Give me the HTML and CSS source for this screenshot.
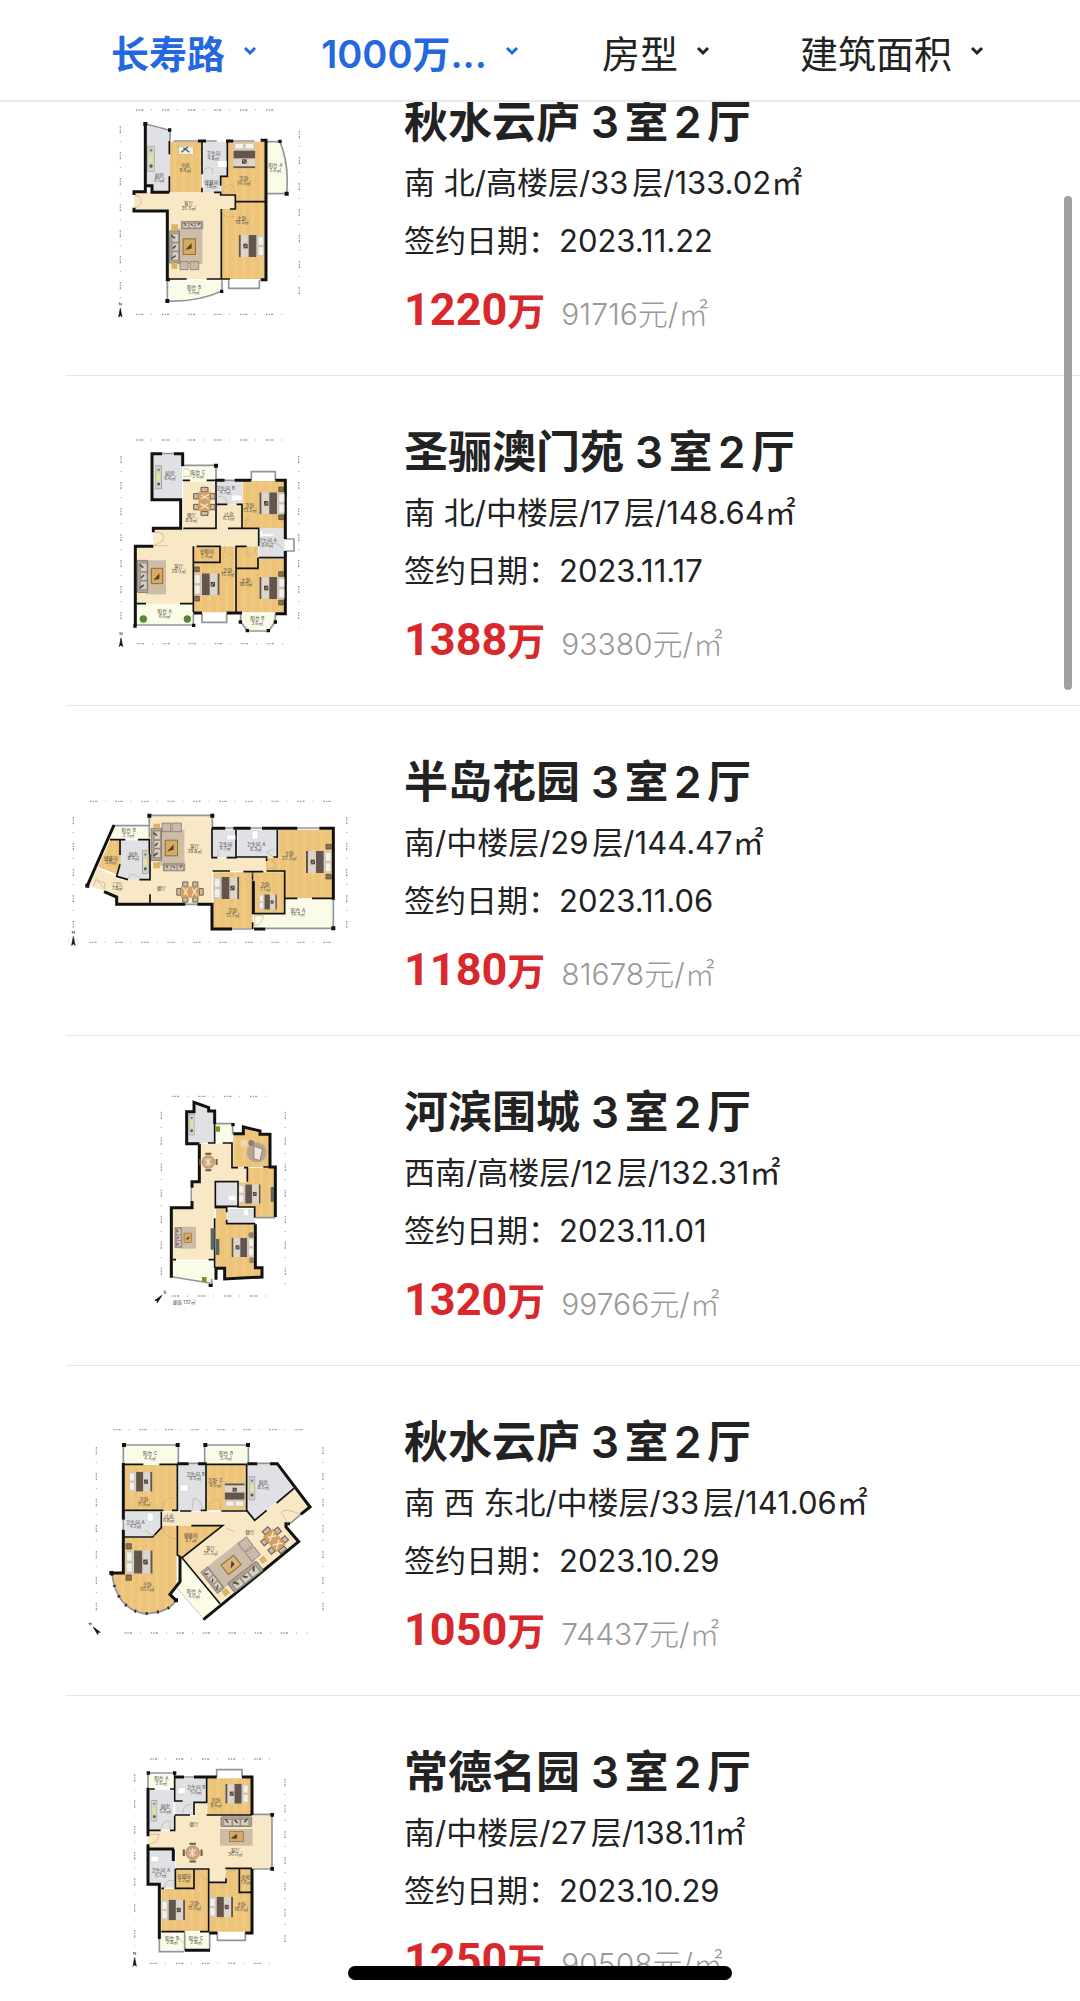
FILE: index.html
```html
<!DOCTYPE html>
<html lang="zh-CN">
<head>
    <meta charset="UTF-8">
    <meta name="viewport" content="width=device-width, initial-scale=1.0">
    <title>成交房源</title>
    <link rel="stylesheet" href="styles.css">
</head>
<body>
    <!-- Shared furniture and floor textures -->
    <svg class="defs" aria-hidden="true">
        <defs>
            <pattern id="wood" width="26" height="60" patternUnits="userSpaceOnUse">
                <rect width="26" height="60" fill="#efc980"/>
                <rect x="13" width="13" height="60" fill="#ecc378"/>
                <path d="M0 0V60M13 0V60" stroke="#e6ba6e" stroke-width="1"/>
            </pattern>
            <symbol id="bed" viewBox="0 0 76 66">
                <rect width="76" height="66" fill="#d9cfc3"/>
                <rect x="1" y="4" width="17" height="27" rx="4" fill="#f3efe9" stroke="#8f857b"/>
                <rect x="1" y="35" width="17" height="27" rx="4" fill="#f3efe9" stroke="#8f857b"/>
                <rect x="23" width="23" height="66" fill="#62554c"/>
                <rect x="50" width="18" height="66" fill="#ddd4ca"/>
                <rect x="70" width="6" height="66" fill="#62554c"/>
                <rect x="49" y="26" width="13" height="14" fill="#504640"/>
                <path d="M51 37l8-8" stroke="#eee" stroke-width="2"/>
            </symbol>
            <symbol id="sofa" viewBox="0 0 100 34">
                <rect x="1" y="1" width="98" height="32" rx="4" fill="#b0a294" stroke="#675d55" stroke-width="2"/>
                <path d="M10 10H36V30H10ZM38 10H62V30H38ZM64 10H90V30H64Z" fill="#d8cdc2" stroke="#83776c" stroke-width="2"/>
                <path d="M15 8l9 13M76 19l9-11M45 12l9 9" stroke="#584f49" stroke-width="5"/>
            </symbol>
            <symbol id="rug" viewBox="0 0 80 110">
                <rect width="80" height="110" fill="#cdbda7"/>
                <rect x="20" y="32" width="38" height="48" fill="#d6aa62" stroke="#906c35" stroke-width="3"/>
                <path d="M32 63l12-13v10z" fill="#54412c" stroke="#54412c" stroke-width="4"/>
            </symbol>
            <symbol id="dining" viewBox="0 0 90 70">
                <path d="M22 3H38V17H22ZM54 3H70V17H54ZM22 53H38V67H22ZM54 53H70V67H54ZM3 24H16V45H3ZM75 24H87V45H75Z" fill="#cdbba5" stroke="#655a50" stroke-width="3"/>
                <rect x="16" y="17" width="58" height="36" fill="#d4a064"/>
                <path d="M24 21l14 25M38 22l-12 22M52 24l16 22M66 22l-14 25" stroke="#f4e5cf" stroke-width="4"/>
            </symbol>
            <symbol id="round" viewBox="0 0 70 70">
                <path d="M24 5H46M24 65H46M5 24V46M65 24V46" stroke="#655a50" stroke-width="7"/>
                <circle cx="35" cy="35" r="23" fill="#d1a779" stroke="#8a6b4c" stroke-width="2"/>
                <path d="M24 25l20 20M44 24l-19 22M34 20v30" stroke="#eee0cc" stroke-width="4"/>
            </symbol>
            <symbol id="stove" viewBox="0 0 22 78">
                <rect x="1" y="1" width="20" height="76" fill="#d3d2c9" stroke="#8a8a84" stroke-width="2"/>
                <rect x="5" y="28" width="11" height="22" fill="#e9e391"/>
                <circle cx="11" cy="61" r="5" fill="#55594d"/>
                <circle cx="11" cy="14" r="4" fill="#80857b"/>
            </symbol>
            <symbol id="north" viewBox="0 0 24 50">
                <path d="M9 10V2l6 8V2" fill="none" stroke="#444" stroke-width="2"/>
                <path d="M12 19L17 45 12 40 7 45Z" fill="#111" stroke="#111" stroke-width="2"/>
            </symbol>
        </defs>
    </svg>

    <div class="screen">
        <header class="filters">
            <button type="button" class="filter active">长寿路
                <svg class="chevron" viewBox="0 0 14 10" aria-hidden="true"><path d="M2 2L7 7L12 2"/></svg>
            </button>
            <button type="button" class="filter active">1000万...
                <svg class="chevron" viewBox="0 0 14 10" aria-hidden="true"><path d="M2 2L7 7L12 2"/></svg>
            </button>
            <button type="button" class="filter">房型
                <svg class="chevron" viewBox="0 0 14 10" aria-hidden="true"><path d="M2 2L7 7L12 2"/></svg>
            </button>
            <button type="button" class="filter">建筑面积
                <svg class="chevron" viewBox="0 0 14 10" aria-hidden="true"><path d="M2 2L7 7L12 2"/></svg>
            </button>
        </header>

        <main class="list">
            <article class="house">
                <svg class="plan" viewBox="18 0 864 720" role="img" aria-label="户型图">
                    <g class="dims">
                        <path d="M228 57H660M228 670H676M181 105V625M718 120V630"/>
                    </g>
                    <path class="living" d="M222 304H484V312H524V354H484V564H326V360H222Z"/>
                    <path class="tile" d="M258 102L330 122V304H278V286H258ZM430 152H502V256H482V304H430Z"/>
                    <g fill="url(#wood)">
                        <path d="M330 152H426V304H330ZM504 152H616V330H528V310H484V258H504ZM484 354H528V332H616V564H484Z"/>
                    </g>
                    <path class="balcony" d="M618 152H660Q686 220 680 306H618ZM322 568H484V600Q410 634 322 630Z"/>
                    <path class="glass" d="M258 99L330 118V150M618 152H660Q688 220 680 308H618M322 568V630Q410 634 486 600V568M506 568V592H598V568M340 150H414M438 150H470M520 150H584"/>
                    <path class="wall" d="M256 96V302H222V312M222 350V360H322V566H330M602 566H618V148H602M498 150H520M414 150H438M256 284H276V304H328"/>
                    <path class="wall thin" d="M328 150V190M328 256V304M426 150V250M502 150V256H482V284M462 304H482V312H526V354H510M526 332H616M484 354V566M326 564H380M440 564H510M426 290V304"/>
                    <path class="door" d="M224 312Q248 318 242 330Q248 342 224 350M430 248Q430 224 458 232V248M488 306Q486 280 520 282L524 308M486 358Q488 384 522 376"/>
                    <path class="post" d="M250 93h12v12h-12zM324 112h10v10h-10zM655 146h10v10h-10zM674 302h12v12h-12zM316 624h12v12h-12zM480 596h10v10h-10z"/>
                    <use href="#stove" x="262" y="164" width="22" height="78"/>
                    <rect x="356" y="166" width="44" height="24" fill="#f4ecdc" stroke="#a79b8a"/>
                    <path d="M364 184l20-16M370 170l18 14" stroke="#43616a" stroke-width="4"/>
                    <rect x="474" y="210" width="26" height="18" fill="#fff"/>
                    <use href="#bed" width="76" height="66" transform="translate(586 156) rotate(90)"/>
                    <use href="#bed" width="76" height="66" transform="translate(612 498) rotate(180)"/>
                    <use href="#rug" x="350" y="410" width="78" height="112"/>
                    <use href="#sofa" x="362" y="386" width="68" height="32"/>
                    <use href="#sofa" width="100" height="34" transform="translate(326 518) rotate(-90)"/>
                    <path d="M334 400h20v18h-20zM334 516h18v18h-18z" fill="#dcb264"/>
                    <path d="M360 512h24v24h-24zM390 512h26v24h-26z" fill="#c8bbae" stroke="#72685f" stroke-width="2"/>
                    <g class="labels">
                        <text x="298" y="258">厨房<tspan x="298" dy="14">6.1㎡</tspan></text>
                        <text x="376" y="228">书房<tspan x="376" dy="14">9.6㎡</tspan></text>
                        <text x="460" y="192">卫生间<tspan x="460" dy="14">4.8㎡</tspan></text>
                        <text x="454" y="278">储藏间<tspan x="454" dy="14">1.8㎡</tspan></text>
                        <text x="552" y="268">次卧<tspan x="552" dy="14">14.0㎡</tspan></text>
                        <text x="646" y="228">阳台A<tspan x="646" dy="14">5.6㎡</tspan></text>
                        <text x="386" y="342">客厅<tspan x="386" dy="14">35.3㎡</tspan></text>
                        <text x="546" y="386">主卧<tspan x="546" dy="14">19.3㎡</tspan></text>
                        <text x="402" y="594">阳台B<tspan x="402" dy="14">5.6㎡</tspan></text>
                    </g>
                    <use href="#north" x="169" y="633" width="24" height="50"/>
                </svg>
                <div class="info">
                    <h2>秋水云庐 3室2厅</h2>
                    <p class="meta">南 北/高楼层/33层/133.02㎡</p>
                    <p class="meta">签约日期：2023.11.22</p>
                    <p class="cost"><strong>1220<span>万</span></strong><span class="unit">91716元/㎡</span></p>
                </div>
            </article>

            <article class="house">
                <svg class="plan" viewBox="18 0 864 720" role="img" aria-label="户型图">
                    <g class="dims">
                        <path d="M228 57H672M230 668H672M183 105V608M716 105V620"/>
                    </g>
                    <path class="living" d="M370 180H466V250H546V322H592V374H398V548H230V374H280V322H370Z"/>
                    <path class="tile" d="M280 102H366V234H280ZM470 180H546V250H470ZM596 322H674V412H596Z"/>
                    <g fill="url(#wood)">
                        <path d="M548 180H674V322H548ZM402 376H524V574H402ZM528 376H594V414H674V574H528Z"/>
                    </g>
                    <path class="balcony" d="M370 136H468V182H370ZM230 550H398V612H230ZM542 578H646V602L626 630H562L542 602Z"/>
                    <path class="glass" d="M306 98H342M370 133H468V178M494 178H524M574 178V152H646V178M230 612H400V580M426 578V604H500V578M542 580V602L562 630H626L646 602V580M676 354H702V390H676"/>
                    <path class="wall" d="M306 98H276V236H362V322H280V334M342 98H368V136M466 178H494M524 178H574M646 178H676V354M676 390V578H646M280 376H226V614M400 576H426M500 576H546"/>
                    <path class="wall thin" d="M368 178H390M440 178H468V322H370M468 250H502M530 250H546V322M504 322H596V376M596 410H674M594 410V442H530M528 376V574M402 424H480V376H410M400 376V574M230 548H258M360 548H400M526 376H560"/>
                    <path class="door" d="M282 334Q320 330 308 360L282 374H322M370 144Q394 138 392 166H370M492 376Q494 404 520 400M560 376V406Q584 404 588 380M556 320V296Q580 292 584 320M502 250Q500 222 474 226M604 382Q620 362 650 368L668 382"/>
                    <path class="post" d="M462 128h12v12h-12zM220 610h10v10h-10zM396 608h10v10h-10zM536 598h10v10h-10zM641 598h10v10h-10zM557 624h10v10h-10zM620 624h10v10h-10z"/>
                    <use href="#stove" x="286" y="130" width="20" height="78"/>
                    <use href="#dining" width="90" height="70" transform="translate(468 196) rotate(90)"/>
                    <rect x="516" y="224" width="28" height="14" fill="#fff"/>
                    <path d="M604 330V342H640" fill="none" stroke="#fff" stroke-width="5"/>
                    <use href="#bed" width="76" height="66" transform="translate(674 280) rotate(180)"/>
                    <use href="#bed" width="76" height="66" transform="translate(674 534) rotate(180)"/>
                    <use href="#bed" x="403" y="457" width="76" height="66"/>
                    <path class="stand" d="M656 198h14v14h-14zM656 282h14v14h-14zM656 452h14v14h-14zM656 538h14v14h-14zM404 438h14v14h-14zM404 526h14v14h-14z"/>
                    <path d="M258 418H318V520H258Z" fill="#cdbda7"/>
                    <path d="M274 442H308V488H274Z" fill="#d6aa62" stroke="#906c35" stroke-width="3"/>
                    <path d="M286 474l10-12v10z" fill="#54412c" stroke="#54412c" stroke-width="4"/>
                    <use href="#sofa" width="100" height="34" transform="translate(231 516) rotate(-90)"/>
                    <circle cx="250" cy="594" r="11" fill="#4f8a32"/>
                    <circle cx="382" cy="594" r="11" fill="#4f8a32"/>
                    <g class="labels">
                        <text x="330" y="162">厨房<tspan x="330" dy="14">6.6㎡</tspan></text>
                        <text x="414" y="158">阳台C<tspan x="414" dy="14">2.6㎡</tspan></text>
                        <text x="394" y="288">餐厅<tspan x="394" dy="14">8.9㎡</tspan></text>
                        <text x="496" y="206">卫生间B<tspan x="496" dy="14">4.7㎡</tspan></text>
                        <text x="506" y="284">过道<tspan x="506" dy="14">6.2㎡</tspan></text>
                        <text x="570" y="258">次卧<tspan x="570" dy="14">13.2㎡</tspan></text>
                        <text x="622" y="364">卫生间A<tspan x="622" dy="14">6.0㎡</tspan></text>
                        <text x="440" y="396">衣帽间<tspan x="440" dy="14">2.4㎡</tspan></text>
                        <text x="356" y="442">客厅<tspan x="356" dy="14">29.0㎡</tspan></text>
                        <text x="504" y="452">次卧<tspan x="504" dy="14">15.2㎡</tspan></text>
                        <text x="558" y="482">主卧<tspan x="558" dy="14">18.0㎡</tspan></text>
                        <text x="314" y="576">阳台A<tspan x="314" dy="14">6.6㎡</tspan></text>
                        <text x="592" y="598">阳台B<tspan x="592" dy="14">3.6㎡</tspan></text>
                    </g>
                    <use href="#north" x="171" y="632" width="24" height="50"/>
                </svg>
                <div class="info">
                    <h2>圣骊澳门苑 3室2厅</h2>
                    <p class="meta">南 北/中楼层/17层/148.64㎡</p>
                    <p class="meta">签约日期：2023.11.17</p>
                    <p class="cost"><strong>1388<span>万</span></strong><span class="unit">93380元/㎡</span></p>
                </div>
            </article>

            <article class="house">
                <svg class="plan" viewBox="18 0 864 540" role="img" aria-label="户型图">
                    <g class="dims">
                        <path d="M90 61H146M166 61H818M88 484H818M40 108V440M860 108V440"/>
                    </g>
                    <path class="living" d="M270 104H456V230H618V270H456V368H170V346L88 312L112 260L172 288L184 296H270Z"/>
                    <path class="tile" d="M182 178H268V296H204L172 284ZM458 146H528V228H458ZM532 146H650V228H532Z"/>
                    <g fill="url(#wood)">
                        <path d="M150 178H182V256L170 280L114 258ZM656 146H818V352H674V272H618V230H656ZM460 274H578V442H460ZM582 274H672V396H582Z"/>
                    </g>
                    <path class="balcony" d="M162 138H268V176H150ZM676 354H818V442H582V400H676Z"/>
                    <path class="glass" d="M162 134H268M268 103H456M268 106V170M457 106V142M496 141H520M572 141H606M712 141H778M820 352V442H616M376 370H412M516 444H578"/>
                    <path class="wall" d="M162 132L82 314M132 332L170 348V370H376M412 370H456V444H516M456 142H496M520 142H572M606 142H712M778 142H820V356M582 444H616"/>
                    <path class="wall thin" d="M150 176H196M234 176H268V220M180 176V222M180 250L170 286L204 296M238 296H270V220M456 142V230H472M500 230H528V146M530 228H620V240M652 146V228H640M458 270H510M550 272H578V300M578 272H610M620 270H674V398H582V300M578 300V400M578 424V444M676 352H712M756 352H820M270 340V368"/>
                    <path class="door" d="M100 316L108 294L134 324V306L110 298M204 292Q212 268 238 290M640 228L620 214L640 204M620 232Q644 232 650 262H620M578 274Q590 316 552 294M584 434V404H610Q608 430 584 434M474 228V204"/>
                    <path class="post" d="M262 98h12v12h-12zM451 98h12v12h-12zM76 308h12v12h-12zM814 436h12v12h-12z"/>
                    <use href="#stove" x="246" y="206" width="20" height="74"/>
                    <use href="#rug" x="296" y="144" width="78" height="112"/>
                    <use href="#sofa" width="100" height="34" transform="translate(272 240) rotate(-90)"/>
                    <use href="#sofa" x="308" y="242" width="68" height="34"/>
                    <path d="M306 126h26v26h-26zM336 126h28v26h-28z" fill="#c8bbae" stroke="#72685f" stroke-width="2"/>
                    <path d="M280 128h20v14h-20zM280 244h20v18h-20z" fill="#dcb264"/>
                    <use href="#dining" x="346" y="300" width="88" height="66"/>
                    <path d="M500 162h26v14h-26zM576 150h18v24h-18z" fill="#fff" stroke="#bbb"/>
                    <use href="#bed" width="76" height="66" transform="translate(814 276) rotate(180)"/>
                    <use href="#bed" x="462" y="288" width="76" height="66"/>
                    <use href="#bed" x="586" y="340" width="76" height="46"/>
                    <path class="stand" d="M798 190h16v14h-16zM798 280h16v14h-16z"/>
                    <g class="labels">
                        <text x="206" y="154">阳台B<tspan x="206" dy="14">2.5㎡</tspan></text>
                        <text x="152" y="236">储藏间<tspan x="152" dy="14">3.6㎡</tspan></text>
                        <text x="220" y="224">厨房<tspan x="220" dy="14">8.4㎡</tspan></text>
                        <text x="172" y="314">门厅<tspan x="172" dy="14">7.8㎡</tspan></text>
                        <text x="304" y="328">餐厅</text>
                        <text x="404" y="202">客厅<tspan x="404" dy="14">39.8㎡</tspan></text>
                        <text x="496" y="194">卫生间<tspan x="496" dy="14">4.7㎡</tspan></text>
                        <text x="588" y="196">卫生间A<tspan x="588" dy="14">6.3㎡</tspan></text>
                        <text x="688" y="222">主卧<tspan x="688" dy="14">22.3㎡</tspan></text>
                        <text x="616" y="316">次卧<tspan x="616" dy="14">7.7㎡</tspan></text>
                        <text x="518" y="394">次卧<tspan x="518" dy="14">12.7㎡</tspan></text>
                        <text x="714" y="392">阳台A<tspan x="714" dy="14">14.4㎡</tspan></text>
                    </g>
                    <circle cx="40" cy="480" r="14" fill="none" stroke="#ddd" stroke-width="2"/>
                    <use href="#north" x="28" y="448" width="24" height="50"/>
                </svg>
                <div class="info">
                    <h2>半岛花园 3室2厅</h2>
                    <p class="meta">南/中楼层/29层/144.47㎡</p>
                    <p class="meta">签约日期：2023.11.06</p>
                    <p class="cost"><strong>1180<span>万</span></strong><span class="unit">81678元/㎡</span></p>
                </div>
            </article>

            <article class="house">
                <svg class="plan" viewBox="18 0 864 720" role="img" aria-label="户型图">
                    <g class="dims">
                        <path d="M336 46H628M336 645H644M304 92V588M676 92V612"/>
                    </g>
                    <path class="living" d="M418 188H516V260H560V304H464V536H338V382H398V304H418Z"/>
                    <path class="tile" d="M402 68L446 86V92H462V186H380V92H402ZM468 306H530V378H468ZM502 384H584V428H502Z"/>
                    <g fill="url(#wood)">
                        <path d="M520 160H550V142L598 156V160H628V258H520ZM562 260H642V408H584V378H534V304H562ZM468 384H500V430H584V562H604V590H496V560H468Z"/>
                    </g>
                    <path class="balcony" d="M468 132H518V186H468ZM338 540H464V596L450 612L338 588Z"/>
                    <path class="glass" d="M468 128H518V160M338 588L450 606M586 410H646M455 594V610M394 320V360"/>
                    <path class="wall" d="M418 188H380V92H402V64L446 80V90H464V130M418 188V302H396V320M396 360V380H334V590M520 158H550V138L600 150V160H630V258H646V408M586 430V560H606V588L494 594V562H468V596"/>
                    <path class="wall thin" d="M464 130V186H444M488 186H516V260H534M552 260H562V302M610 258H630M464 302H534V378H584V410M480 302H466V376H532M464 380H500V394M500 416V428H586M464 412V560M338 536H348M446 536H464"/>
                    <path class="post" d="M514 126h10v10h-10zM446 608h12v10h-12z"/>
                    <use href="#stove" x="386" y="98" width="18" height="66"/>
                    <use href="#round" x="416" y="212" width="58" height="62"/>
                    <circle cx="590" cy="214" r="30" fill="#b8a493"/>
                    <path d="M582 196l26 8-8 34-18-4z" fill="#eee6da" stroke="#756759" stroke-width="2"/>
                    <circle cx="574" cy="186" r="9" fill="#917d6c"/>
                    <path d="M542 178h20v18h-20z" fill="#f0d8bb"/>
                    <use href="#bed" x="536" y="310" width="66" height="58"/>
                    <use href="#bed" width="68" height="58" transform="translate(582 528) rotate(180)"/>
                    <path d="M632 318h10v44h-10zM468 474h10v48h-10zM452 442h12v64h-12z" fill="#5a6660"/>
                    <circle cx="574" cy="462" r="9" fill="#9a8262"/>
                    <path d="M568 530h14v16h-14z" fill="#9a8262"/>
                    <use href="#rug" x="360" y="436" width="48" height="68"/>
                    <use href="#sofa" width="64" height="26" transform="translate(342 502) rotate(-90)"/>
                    <path d="M506 344h20v14h-20zM552 386h12v16h-12z" fill="#fff"/>
                    <path d="M466 136h14v16h-14zM426 588h14v14h-14z" fill="#6e9b27"/>
                    <text class="caption" x="338" y="669">建面 132㎡</text>
                    <use href="#north" width="24" height="50" transform="translate(310 621) rotate(43)"/>
                </svg>
                <div class="info">
                    <h2>河滨围城 3室2厅</h2>
                    <p class="meta">西南/高楼层/12层/132.31㎡</p>
                    <p class="meta">签约日期：2023.11.01</p>
                    <p class="cost"><strong>1320<span>万</span></strong><span class="unit">99766元/㎡</span></p>
                </div>
            </article>

            <article class="house">
                <svg class="plan" viewBox="18 0 864 720" role="img" aria-label="户型图">
                    <g class="dims">
                        <path d="M160 56H742M194 666H742M109 108V616M789 108V616"/>
                    </g>
                    <path class="living" d="M308 302H560L584 328L702 234L748 288L680 344L714 392L478 578L368 440L488 344H308Z"/>
                    <path class="tile" d="M354 160H436V300H354ZM562 160H652L702 232L584 326L562 300ZM194 302H304V350L280 378H194Z"/>
                    <g fill="url(#wood)">
                        <path d="M194 162H350V300H194ZM440 162H560V298H440ZM354 344H486L366 438H352ZM194 380H280L304 352V344H350V518L330 548L348 568Q326 606 250 608Q166 586 156 486H194Z"/>
                    </g>
                    <path class="balcony" d="M192 104H352V160H192ZM436 104H560V160H436ZM366 444L476 580L430 624L350 530Z"/>
                    <path class="glass" d="M192 102H352M190 104V156M355 104V156M436 102H562M434 104V156M565 104V156M386 157H414M592 157H630M190 326V356M156 488Q168 590 250 608Q326 606 346 570M690 338L722 310"/>
                    <path class="wall" d="M190 156V326M190 356V486H152M352 158H386M414 158H440M562 158H592M630 158H652L750 288L722 310M690 338H678V348L716 392L430 626M360 438V512L330 550L348 568"/>
                    <path class="wall thin" d="M190 160H250M298 160H352V298H336M438 158V298H422M480 160H560V298L584 328L620 298M650 276L702 232M190 298H310M360 300H394M484 300H560M304 302V350L278 378H190M352 344V432L366 440L488 344H394M366 440L480 578M440 160H480"/>
                    <path class="thick-dots" d="M156 488Q168 590 250 608Q326 606 346 570"/>
                    <path class="door" d="M346 262Q306 258 308 296M396 298L400 262Q424 264 428 298M446 298Q446 262 476 264L482 298M310 350Q316 386 350 382M664 304Q676 290 714 308M664 304L684 338M256 356Q270 378 294 372M500 352L522 362M350 530L424 616"/>
                    <path class="post" d="M186 96h12v12h-12zM347 96h12v12h-12zM430 96h12v12h-12zM558 96h12v12h-12zM148 480h12v12h-12zM342 562h12v12h-12z"/>
                    <use href="#bed" x="200" y="182" width="84" height="60"/>
                    <use href="#bed" width="88" height="60" transform="translate(494 296) rotate(-90)"/>
                    <use href="#bed" x="198" y="418" width="80" height="70"/>
                    <path class="stand" d="M198 398h16v16h-16zM198 492h16v16h-16z"/>
                    <use href="#stove" x="566" y="192" width="20" height="80"/>
                    <path d="M360 222h24v18h-24zM262 306h18v24h-18z" fill="#fff" stroke="#bbb"/>
                    <g transform="translate(516 462) rotate(-38)">
                        <rect x="-62" y="-42" width="124" height="82" fill="#cbbda9"/>
                        <rect x="-26" y="-20" width="48" height="36" fill="#dbb67c" stroke="#906c35" stroke-width="3"/>
                        <path d="M-6 4l12-12v10z" fill="#54412c" stroke="#54412c" stroke-width="3"/>
                        <use href="#sofa" x="-52" y="34" width="124" height="38"/>
                        <use href="#sofa" width="84" height="36" transform="translate(-92 42) rotate(-90)"/>
                        <path d="M54 -40h32v32h-32zM54 -4h32v32h-32z" fill="#c8bbae" stroke="#72685f" stroke-width="2"/>
                        <path d="M-74 44h18v18h-18zM74 36h18v18h-18z" fill="#dcb264"/>
                    </g>
                    <use href="#dining" width="94" height="76" transform="translate(642 328) rotate(50)"/>
                    <g class="labels">
                        <text x="270" y="132">阳台C<tspan x="270" dy="14">4.4㎡</tspan></text>
                        <text x="498" y="132">阳台B<tspan x="498" dy="14">3.4㎡</tspan></text>
                        <text x="252" y="270">次卧<tspan x="252" dy="14">11.9㎡</tspan></text>
                        <text x="406" y="194">卫生间B<tspan x="406" dy="14">6.5㎡</tspan></text>
                        <text x="466" y="214">次卧C<tspan x="466" dy="14">9.0㎡</tspan></text>
                        <text x="610" y="220">厨房<tspan x="610" dy="14">8.5㎡</tspan></text>
                        <text x="226" y="338">卫生间A<tspan x="226" dy="14">4.2㎡</tspan></text>
                        <text x="326" y="320">过道<tspan x="326" dy="14">6.8㎡</tspan></text>
                        <text x="392" y="378">储藏间<tspan x="392" dy="14">3.7㎡</tspan></text>
                        <text x="570" y="368">餐厅</text>
                        <text x="452" y="418">客厅<tspan x="452" dy="14">35.2㎡</tspan></text>
                        <text x="262" y="526">主卧<tspan x="262" dy="14">20.5㎡</tspan></text>
                        <text x="402" y="546">阳台A<tspan x="402" dy="14">4.0㎡</tspan></text>
                    </g>
                    <use href="#north" width="24" height="50" transform="translate(78 642) rotate(-42)"/>
                </svg>
                <div class="info">
                    <h2>秋水云庐 3室2厅</h2>
                    <p class="meta">南 西 东北/中楼层/33层/141.06㎡</p>
                    <p class="meta">签约日期：2023.10.29</p>
                    <p class="cost"><strong>1050<span>万</span></strong><span class="unit">74437元/㎡</span></p>
                </div>
            </article>

            <article class="house">
                <svg class="plan" viewBox="18 0 864 720" role="img" aria-label="户型图">
                    <g class="dims">
                        <path d="M270 54H632M270 667H632M224 100V616M675 114V624"/>
                    </g>
                    <path class="living" d="M346 224H402V184H440V222H636V382H498V422H446V382H348V324H264V270H346Z"/>
                    <path class="tile" d="M268 146H340V266H268ZM346 112H440V184H402V222H346ZM268 328H346V440H302V430H268Z"/>
                    <g fill="url(#wood)">
                        <path d="M442 112H576V222H442ZM348 386H444V570H304V444H348ZM448 424H498V384H576V572H448Z"/>
                    </g>
                    <path class="balcony" d="M266 98H342V144H266ZM300 574H448V626H300Z"/>
                    <path class="glass" d="M266 96H342M264 98V140M372 108H402M470 108V86H546V108M578 220H636V384H578M472 574V598H556V574M298 574V632H372M449 574V626M374 574V626"/>
                    <path class="wall" d="M264 140V286M264 310V324H342M264 324V430H298V594M342 108H372M402 108H470M546 108H576V222M576 384V576H556M472 576H448M374 628H450M340 324V360"/>
                    <path class="wall thin" d="M344 96V144H330M268 144H284M344 144V180H368M402 222V184H440V110M344 222H390M440 222H576M344 224V268H330M264 268H302M346 384H446V572H420M346 384V442H402V384M304 442H312M446 424H498V412M496 382H576M538 384V454H576M304 572H374"/>
                    <path class="door" d="M268 280H298Q294 306 266 310M304 264Q306 238 330 240V264M368 216Q370 188 394 190M314 440Q316 414 342 418V440M418 386Q420 414 442 416M496 412Q498 386 528 388M446 202Q466 194 470 214M350 584L372 608"/>
                    <path class="post" d="M260 91h10v10h-10zM339 91h10v10h-10zM631 216h11v11h-11zM631 378h11v11h-11z"/>
                    <use href="#stove" x="274" y="174" width="18" height="70"/>
                    <path d="M354 140h22v18h-22zM272 346h24v16h-24z" fill="#fff" stroke="#bbb"/>
                    <use href="#bed" width="78" height="60" transform="translate(570 188) rotate(180)"/>
                    <use href="#bed" x="305" y="474" width="70" height="66"/>
                    <use href="#bed" x="449" y="466" width="70" height="64"/>
                    <use href="#sofa" x="480" y="226" width="98" height="32"/>
                    <rect x="480" y="264" width="98" height="50" fill="#cdbda7"/>
                    <rect x="508" y="272" width="42" height="30" fill="#d6aa62" stroke="#906c35" stroke-width="2"/>
                    <path d="M514 292l16-12v12z" fill="#54412c" stroke="#54412c" stroke-width="2"/>
                    <use href="#round" x="366" y="304" width="64" height="62"/>
                    <g class="labels">
                        <text x="304" y="118">阳台A<tspan x="304" dy="14">2.6㎡</tspan></text>
                        <text x="316" y="202">厨房<tspan x="316" dy="14">5.6㎡</tspan></text>
                        <text x="408" y="144">卫生间B<tspan x="408" dy="14">5.0㎡</tspan></text>
                        <text x="468" y="184">次卧<tspan x="468" dy="14">9.6㎡</tspan></text>
                        <text x="402" y="256">餐厅</text>
                        <text x="526" y="332">客厅<tspan x="526" dy="14">36.0㎡</tspan></text>
                        <text x="302" y="394">卫生间A<tspan x="302" dy="14">5.7㎡</tspan></text>
                        <text x="372" y="410">衣帽间<tspan x="372" dy="14">2.2㎡</tspan></text>
                        <text x="558" y="414">衣柜<tspan x="558" dy="14">1.6㎡</tspan></text>
                        <text x="404" y="492">次卧<tspan x="404" dy="14">15.0㎡</tspan></text>
                        <text x="544" y="496">主卧<tspan x="544" dy="14">16.0㎡</tspan></text>
                        <text x="336" y="596">阳台B<tspan x="336" dy="14">2.8㎡</tspan></text>
                        <text x="408" y="596">阳台C<tspan x="408" dy="14">2.8㎡</tspan></text>
                    </g>
                    <use href="#north" x="212" y="631" width="24" height="50"/>
                </svg>
                <div class="info">
                    <h2>常德名园 3室2厅</h2>
                    <p class="meta">南/中楼层/27层/138.11㎡</p>
                    <p class="meta">签约日期：2023.10.29</p>
                    <p class="cost"><strong>1250<span>万</span></strong><span class="unit">90508元/㎡</span></p>
                </div>
            </article>
        </main>

        <div class="scroll-thumb"></div>
        <div class="home-bar"></div>
    </div>
</body>
</html>
```
FILE: styles.css
```css
* {
    margin: 0;
    padding: 0;
    box-sizing: border-box;
}

body {
    background-color: #fff;
    color: #222;
    font-family: Inter, 'Noto Sans CJK SC', sans-serif;
    text-autospace: normal;
}

.defs {
    position: absolute;
    width: 0;
    height: 0;
}

.screen {
    position: relative;
    height: 100vh;
    overflow: hidden;
}

/* Filter bar */
.filters {
    position: absolute;
    top: 0;
    left: 0;
    right: 0;
    z-index: 2;
    display: flex;
    height: 102px;
    padding: 2px 70px 0 66px;
    background-color: #fff;
    border-bottom: 2px solid #e9e9e9;
}

.filter {
    flex: 1;
    display: flex;
    align-items: center;
    justify-content: center;
    gap: 18px;
    border: none;
    background: none;
    color: #222;
    font-family: inherit;
    font-size: 38px;
    white-space: nowrap;
    text-autospace: no-autospace;
    cursor: pointer;
}

.filter.active {
    color: #2468df;
    font-weight: 600;
}

.chevron {
    width: 14px;
    height: 10px;
    fill: none;
    stroke: currentColor;
    stroke-width: 3;
}

/* House list */
.list {
    padding-top: 46px;
}

.house {
    display: flex;
    align-items: center;
    gap: 50px;
    height: 330px;
    margin-left: 66px;
    border-bottom: 1px solid #e6e6e6;
}

.plan {
    flex: none;
    width: 288px;
}

.info {
    flex: 1;
    padding-top: 18px;
    white-space: nowrap;
}

.info h2 {
    font-size: 44px;
    line-height: 64px;
    font-weight: 600;
}

.meta {
    font-size: 31px;
    line-height: 58px;
}

.cost {
    display: flex;
    align-items: baseline;
    gap: 16px;
    height: 80px;
    line-height: 80px;
    text-autospace: no-autospace;
}

.cost strong {
    color: #d8282c;
    font-family: Roboto, 'Noto Sans CJK SC', sans-serif;
    font-size: 45px;
}

.cost strong span {
    font-size: 38px;
}

.unit {
    color: #999;
    font-size: 30px;
    font-weight: 300;
}

/* Floor plans */
.dims path {
    fill: none;
    stroke: #a0a0a0;
    stroke-width: 4;
    stroke-dasharray: 5 3 4 3 7 24 2 30;
}

.living {
    fill: #f9e8c5;
}

.tile {
    fill: #e0e1e4;
}

.balcony {
    fill: #fbfce8;
}

.wall {
    fill: none;
    stroke: #111;
    stroke-width: 9;
}

.wall.thin {
    stroke-width: 5;
}

.glass {
    fill: none;
    stroke: #92959a;
    stroke-width: 5;
}

.door {
    fill: none;
    stroke: #c4ad83;
    stroke-width: 2;
}

.thick-dots {
    fill: none;
    stroke: #333;
    stroke-width: 9;
    stroke-dasharray: 6 28;
}

.post {
    fill: #111;
}

.stand {
    fill: #8c7350;
    stroke: #4c4032;
    stroke-width: 2;
}

.labels text,
.caption {
    fill: #55504a;
    font-size: 14px;
    text-anchor: middle;
}

.caption {
    text-anchor: start;
}

/* System overlays */
.scroll-thumb {
    position: absolute;
    top: 196px;
    right: 8px;
    z-index: 3;
    width: 8px;
    height: 494px;
    border-radius: 4px;
    background-color: #a0a0a0;
}

.home-bar {
    position: absolute;
    bottom: 21px;
    left: 50%;
    z-index: 3;
    width: 384px;
    height: 14px;
    margin-left: -192px;
    border-radius: 7px;
    background-color: #000;
}
```
